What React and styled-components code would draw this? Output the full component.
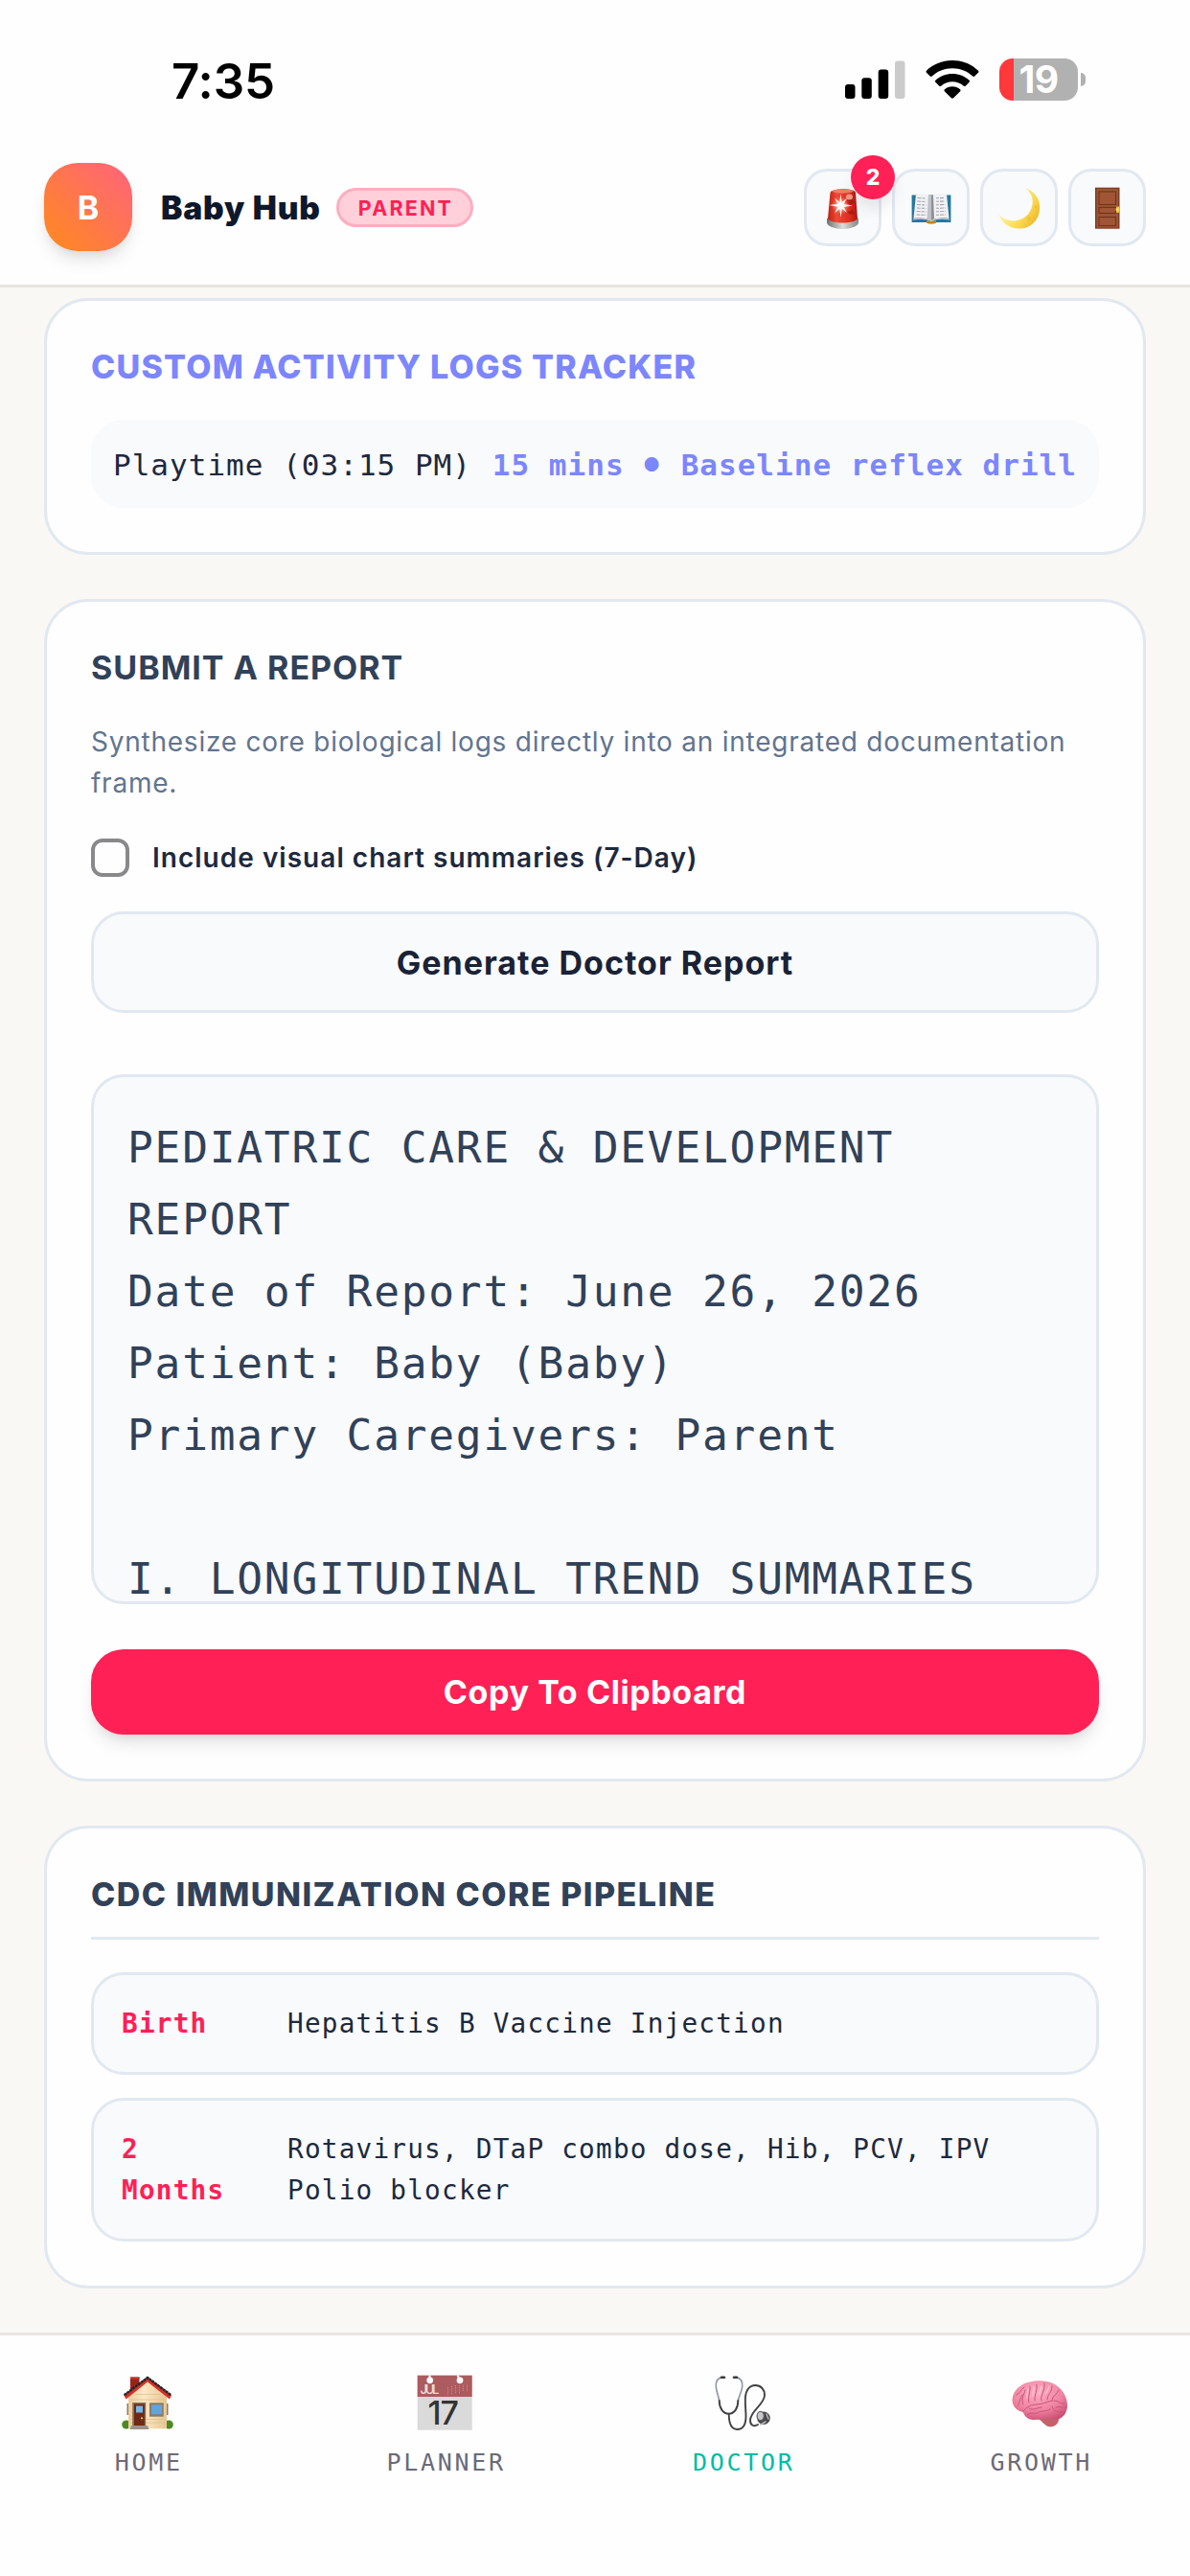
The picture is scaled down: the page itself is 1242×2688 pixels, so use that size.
import React, { useState } from "react";
import styled, { createGlobalStyle } from "styled-components";

const sans = `Inter, "Liberation Sans", sans-serif`;
const mono = `"DejaVu Sans Mono", "Liberation Mono", monospace`;

const REPORT = `PEDIATRIC CARE & DEVELOPMENT REPORT
Date of Report: June 26, 2026
Patient: Baby (Baby)
Primary Caregivers: Parent

I. LONGITUDINAL TREND SUMMARIES`;

const vaccines = [
    { age: "Birth", text: "Hepatitis B Vaccine Injection" },
    { age: "2 Months", text: "Rotavirus, DTaP combo dose, Hib, PCV, IPV Polio blocker" },
];

const SignalIcon = () => (
    <svg width="63" height="40" viewBox="0 0 63 40">
        <rect x="0" y="25" width="10.5" height="15" rx="3" fill="#000" />
        <rect x="17.3" y="18.3" width="10.5" height="21.7" rx="3" fill="#000" />
        <rect x="34.7" y="9.5" width="10.5" height="30.5" rx="3" fill="#000" />
        <rect x="52" y="0.5" width="10.5" height="39.5" rx="3" fill="#cbcbcb" />
    </svg>
);

const WifiIcon = () => (
    <svg width="56" height="40" viewBox="0 0 56 40">
        <path d="M28 0C38.800 0 48.300 4.200 55 10.700c.6.600.6 1.400.1 2L51.300 16.500c-.6.600-1.500.600-2.100 0C43.600 11.400 36.200 8.300 28 8.300S12.400 11.400 6.800 16.500c-.6.600-1.500.600-2.100 0L.9 12.700c-.5-.6-.5-1.400.1-2C7.700 4.200 17.200 0 28 0z" />
        <path d="M28 14C34.800 14 41 16.600 45.600 20.800c.6.600.6 1.400 0 2l-3.900 3.900c-.5.500-1.300.5-1.900 0C36.700 23.900 32.500 22.200 28 22.200s-8.700 1.700-11.800 4.500c-.6.500-1.400.5-1.900 0l-3.900-3.900c-.6-.6-.6-1.400 0-2C15 16.600 21.200 14 28 14z" />
        <path d="M28 27.300c3.100 0 5.900 1.100 8.100 2.900.6.500.6 1.400.1 2L29.100 39.300c-.6.600-1.600.6-2.200 0L19.800 32.200c-.5-.6-.5-1.500.1-2 2.200-1.800 5-2.900 8.100-2.900z" />
    </svg>
);

const SirenIcon = () => (
    <svg width="48" height="48" viewBox="0 0 48 48" overflow="visible">
        <defs>
            <linearGradient id="dome" x1="0" y1="0" x2="1" y2="0">
                <stop offset="0" stopColor="#c01f14" />
                <stop offset="0.3" stopColor="#ee4a35" />
                <stop offset="0.75" stopColor="#dc2c1c" />
                <stop offset="1" stopColor="#a81a12" />
            </linearGradient>
            <radialGradient id="glow">
                <stop offset="0" stopColor="#fff" />
                <stop offset="0.4" stopColor="#ffb9a6" stopOpacity="0.7" />
                <stop offset="1" stopColor="#ff6a50" stopOpacity="0" />
            </radialGradient>
            <linearGradient id="base" x1="0" y1="0" x2="1" y2="0">
                <stop offset="0" stopColor="#70716f" />
                <stop offset="0.5" stopColor="#dedddb" />
                <stop offset="1" stopColor="#858583" />
            </linearGradient>
        </defs>
        <path d="M7 36.500C7 33 40 33 40 36.500V40c0 4-8 7-16.500 7S7 44 7 40z" fill="url(#base)" />
        <path d="M10.500 9C12 4 36 4 37 9l2 27c-3 6-28 6-31 0z" fill="url(#dome)" />
        <ellipse cx="23.500" cy="7.500" rx="11" ry="2.200" fill="#f47c66" />
        <path d="M26 18l6-3 4 4-5 4zM28 29l6-2 2 4-5 1z" fill="#8f1710" opacity="0.6" />
        <ellipse cx="30.500" cy="13.500" rx="3.500" ry="3" fill="#f7b4a6" opacity="0.8" />
        <circle cx="21.500" cy="22.500" r="10" fill="url(#glow)" />
        <path d="M21.500 10l1.200 9L28 14.500l-3.300 6.500L34 22.500l-9.300 1.400 3.300 6.100-5.300-4L21.500 35l-1.200-9-5.300 4.500 3.300-6.500L9.500 22l8.800-1.200-3.300-6.300 5.300 4.500z" fill="#fff" opacity="0.9" />
    </svg>
);

const BookIcon = () => (
    <svg width="48" height="48" viewBox="0 0 48 48" overflow="visible">
        <path d="M3.600 11.500h40.800v28.400H3.600z" fill="#25779f" />
        <path d="M19 38h10v2.500c-2 1.600-8 1.600-10 0z" fill="#b58a22" />
        <path d="M5.500 36L8 10.500c6-1 12-.5 16 2 4-2.500 10-3 16-2L42.500 36c-7-1-14-.5-18.500 2-4.500-2.500-11.500-3-18.500-2z" fill="#f1f1f4" />
        <path d="M24 12.500V38c-1-1-3-1.700-4.500-2L21 11c1.200.4 2.200.9 3 1.500z" fill="#bfc0c8" />
        <path d="M24 12.500V38c1-1 2-1.500 3-1.800L26 11.400c-.8.300-1.400.6-2 1.100z" fill="#8e9099" />
        <g stroke="#a3a5b0" strokeWidth="1.100" fill="none">
            <path d="M9.500 14.500l9 .5M9.300 18l9.200.5M9 21.500l9.500.5M8.800 25l9.700.5M8.600 28.500l9.800.5M8.400 32l9.800.5" strokeDasharray="4 1 3 1" />
            <path d="M29 14.800l9-.3M29 18.300l9.200-.3M29 21.800l9.500-.3M29 25.300l9.700-.3M29 28.800l9.800-.3M29 32.300l10-.3" strokeDasharray="3 1 4 1" />
        </g>
        <path d="M5 37c7-1.500 14-1 19 1.500 5-2.500 12-3 19-1.500" stroke="#c9cad2" strokeWidth="1.200" fill="none" />
    </svg>
);

const MoonIcon = () => (
    <svg width="48" height="48" viewBox="0 0 48 48" overflow="visible">
        <defs>
            <linearGradient id="moon" x1="0.2" y1="0.4" x2="1" y2="0.9">
                <stop offset="0" stopColor="#fdf3a3" />
                <stop offset="0.55" stopColor="#fbd84d" />
                <stop offset="1" stopColor="#e8ae22" />
            </linearGradient>
        </defs>
        <path d="M30 4c9.500 3.500 15.200 11 15.200 20.500C45.200 37 36 46.600 23.500 46.600 13.500 46.600 5.500 41 2.500 31.800 8 37.500 14 39.200 20.500 38.200 31 36.500 38 28 37.700 18 37.500 12.500 35 8 30 4z" fill="url(#moon)" />
        <circle cx="34" cy="36" r="2" fill="#e2b02c" opacity="0.35" />
        <circle cx="41" cy="24" r="1.500" fill="#e2b02c" opacity="0.35" />
    </svg>
);

const DoorIcon = () => (
    <svg width="48" height="48" viewBox="0 0 48 48" overflow="visible">
        <rect x="11" y="3.700" width="25.500" height="43" fill="#7c3f25" />
        <rect x="12.500" y="5" width="22.500" height="40.500" fill="#9c5434" />
        <rect x="15" y="8" width="17.500" height="13.500" fill="#a05636" stroke="#713518" strokeWidth="1.100" />
        <rect x="15" y="24.500" width="17.500" height="6" fill="#a05636" stroke="#713518" strokeWidth="1.100" />
        <rect x="15" y="34.500" width="17.500" height="9" fill="#a05636" stroke="#713518" strokeWidth="1.100" />
        <rect x="33" y="23.500" width="3.500" height="6.500" rx="1" fill="#f1c232" />
        <rect x="32.500" y="25.500" width="3" height="2" fill="#fce57b" />
    </svg>
);

const HomeIcon = () => (
    <svg width="60" height="60" viewBox="0 0 60 60" overflow="visible">
        <defs>
            <linearGradient id="wall" x1="0" y1="0" x2="1" y2="0">
                <stop offset="0" stopColor="#ecd0a0" />
                <stop offset="0.4" stopColor="#fbe8c4" />
                <stop offset="1" stopColor="#e6c794" />
            </linearGradient>
        </defs>
        <circle cx="6.800" cy="53" r="4.600" fill="#4c8a24" />
        <circle cx="51.200" cy="53" r="4.600" fill="#4c8a24" />
        <path d="M7.500 31h2v12h-2zM48.500 31h2v12h-2z" fill="#8d7a68" />
        <path d="M11 3.500h9.500V19H11z" fill="#9c231b" />
        <path d="M11 3.500h9.500v2H11z" fill="#c4392e" />
        <path d="M9 24L29 7l20 17v33.300H9z" fill="url(#wall)" />
        <path d="M11 27h36M11 47.500h36M11 51h36M16 21.500h26" stroke="#dcbd8c" strokeWidth="0.700" />
        <path d="M29 3L54 22.300 52 26.500 29 8.500 6.500 26.500 4.300 22.300z" fill="#d23228" />
        <path d="M4.600 22.300L29 4l24.600 18.300" stroke="#1f2428" strokeWidth="2.400" strokeDasharray="3 0.600" fill="none" />
        <path d="M13.200 30h14v24.500h-14z" fill="#8d6f54" />
        <path d="M15 31.500h10.800v23H15z" fill="#6d2a18" />
        <path d="M17 33.500h7v7h-7z" fill="#74b9e8" />
        <circle cx="23" cy="46.300" r="1.100" fill="#f5c33b" />
        <path d="M31 30.300h14.700v14.400H31z" fill="#8d7a64" />
        <path d="M33 32.300h11v10H33z" fill="#62a5dc" />
        <path d="M12 54h17l1.500 4h-20z" fill="#9c938c" />
    </svg>
);

const CalendarIcon = () => (
    <svg width="60" height="60" viewBox="0 0 60 60" overflow="visible">
        <rect x="-0.300" y="1.700" width="57" height="57" fill="#dadada" />
        <rect x="-0.300" y="1.700" width="57" height="22.300" fill="#ac5b5e" />
        <path d="M12.500 1.500v4M41.500 1.500l2 4" stroke="#fdfdfd" strokeWidth="2" />
        <circle cx="12.700" cy="6.800" r="3.400" fill="#fdfdfd" />
        <circle cx="44" cy="6.800" r="3.400" fill="#fdfdfd" />
        <path d="M31.500 14v8M35.500 13v9M39.500 12v9M43.500 12v9M47.500 11.500v7M51.500 11.500v7" stroke="#c98b8d" strokeWidth="1" strokeDasharray="1 0.800" />
        <text x="2.500" y="21.300" fontFamily="Inter" fontSize="13" fontWeight="500" textLength="22.500" fill="#f0dede">JUL</text>
        <text x="10.500" y="53" fontFamily="Inter" fontSize="34" fontWeight="500" textLength="35" fill="#333">17</text>
    </svg>
);

const StethoscopeIcon = () => (
    <svg width="60" height="60" viewBox="0 0 60 60" overflow="visible" fill="none" strokeLinecap="round">
        <path d="M8 3.700C2.500 4.500 1 8 1.300 13c.3 5 2.400 10 3.400 15" stroke="#9499a6" strokeWidth="1.700" />
        <path d="M22 3.700c5.500.8 7 4.300 6.700 9.300-.3 5-3.400 10-4.400 15" stroke="#9499a6" strokeWidth="1.700" />
        <path d="M7 3.700h3M20 3.700h3" stroke="#3a3a3c" strokeWidth="2.600" />
        <path d="M4.700 28c0 8 4 13.700 9.900 13.700S24.300 36 24.300 28" stroke="#404143" strokeWidth="1.900" />
        <path d="M14.700 41.700C14.700 52 17.500 58 23.500 58c6.500 0 9-6 9-14 0-6-1-12-.6-19 .4-8 4.400-13 10.400-13s9.900 4.500 9.700 10.500C51.700 32 37 39 37 48.500c0 5.500 4 7 8 4.500" stroke="#404143" strokeWidth="1.900" />
        <circle cx="51" cy="46.300" r="6.800" fill="#4a4a4d" />
        <ellipse cx="47.700" cy="44" rx="3.600" ry="4.600" fill="#c9c9cd" stroke="#5e5e61" strokeWidth="1.200" />
        <path d="M48 53l5-3M54 42l2 5" stroke="#b9b9bd" strokeWidth="1.500" />
    </svg>
);

const BrainIcon = () => (
    <svg width="60" height="60" viewBox="0 0 60 60" overflow="visible">
        <defs>
            <radialGradient id="brain" cx="0.45" cy="0.3" r="0.75">
                <stop offset="0" stopColor="#fdaec3" />
                <stop offset="0.6" stopColor="#f084a2" />
                <stop offset="1" stopColor="#cb4f73" />
            </radialGradient>
        </defs>
        <path d="M27 47l20-4 1 5c-.5 5-5.500 8-10 7.200-4-.7-6-4.200-11-8.200z" fill="#c4616b" />
        <path d="M10.500 40C4 38.500-.5 34-.5 27 0 17 9 10 18 8.500c8-2 17-1.500 24 1.500 8 4 14.500 12 15 22 .3 8-4 14-10 15.500-5 .5-8-2-12-1.500-5 1.500-14 3.500-19 .5-3-1.500-4-4-5.500-6.500z" fill="url(#brain)" />
        <g stroke="#c9557a" strokeWidth="1" fill="none" strokeLinecap="round">
            <path d="M11 39c3-4 8-7 14-7 7-.5 11-3 17-4M6 33c1-5 2-8 4-11M4 22c3-1 4-5 8-8M11 32c-3-6 1-10 2-15M17 30c-2-6 2-11 1-17M23 28c-1-5 3-10 2-17M30 28c-2-6 4-9 3-18M36 27c0-6 5-7 5-14M41 27c1-5 6-6 7-10M43 28c5 0 7 4 11 3M45 35c4-2 8 2 11 0M41 34c1 5 6 6 11 6" />
            <path d="M15 43c4-4 8 0 12-3 4-2 8 0 12-3M17 36c4 3 9-1 13-1" />
        </g>
        <g stroke="#ffc9d7" strokeWidth="1.400" fill="none" strokeLinecap="round" opacity="0.8">
            <path d="M15 25c-1-4 1-7 1-9M21 23c0-4 1-7 1-9M28 22c0-4 2-6 2-9M35 20c1-3 3-4 3-7" />
        </g>
    </svg>
);

const tabs = [
    { id: "home", label: "HOME", icon: <HomeIcon /> },
    { id: "planner", label: "PLANNER", icon: <CalendarIcon /> },
    { id: "doctor", label: "DOCTOR", icon: <StethoscopeIcon /> },
    { id: "growth", label: "GROWTH", icon: <BrainIcon /> },
];

const App = () => {
    const [activeTab, setActiveTab] = useState("doctor");
    const [includeCharts, setIncludeCharts] = useState(false);

    return (
        <>
            <GlobalStyle />
            <Screen>
                <Header>
                    <StatusBar>
                        <Time>7:35</Time>
                        <StatusIcons>
                            <SignalIcon />
                            <WifiIcon />
                            <BatteryWrap>
                                <Battery>19</Battery>
                                <BatteryTip />
                            </BatteryWrap>
                        </StatusIcons>
                    </StatusBar>
                    <TopBar>
                        <Logo>B</Logo>
                        <AppName>Baby Hub</AppName>
                        <RolePill>PARENT</RolePill>
                        <Actions>
                            <IconButton>
                                <SirenIcon />
                                <CountBadge>2</CountBadge>
                            </IconButton>
                            <IconButton><BookIcon /></IconButton>
                            <IconButton><MoonIcon /></IconButton>
                            <IconButton><DoorIcon /></IconButton>
                        </Actions>
                    </TopBar>
                </Header>

                <Main>
                    <Card>
                        <CardTitle $color="#7c86ff" $weight={800} $spacing="1.2px">CUSTOM ACTIVITY LOGS TRACKER</CardTitle>
                        <LogRow>
                            <span>Playtime (03:15 PM)</span>
                            <strong>15 mins <Bullet>•</Bullet> Baseline reflex drill</strong>
                        </LogRow>
                    </Card>

                    <Card>
                        <CardTitle $weight={700} $spacing="1px">SUBMIT A REPORT</CardTitle>
                        <Description>
                            Synthesize core biological logs directly into an integrated documentation frame.
                        </Description>
                        <CheckLabel>
                            <Checkbox
                                type="checkbox"
                                checked={includeCharts}
                                onChange={(e) => setIncludeCharts(e.target.checked)}
                            />
                            Include visual chart summaries (7-Day)
                        </CheckLabel>
                        <GenerateButton>Generate Doctor Report</GenerateButton>
                        <ReportBox>{REPORT}</ReportBox>
                        <CopyButton>Copy To Clipboard</CopyButton>
                    </Card>

                    <Card>
                        <DividedTitle $weight={800} $spacing="1.470px">CDC IMMUNIZATION CORE PIPELINE</DividedTitle>
                        <VaccineList>
                            {vaccines.map((v) => (
                                <VaccineRow key={v.age}>
                                    <VaccineAge>{v.age}</VaccineAge>
                                    <VaccineText>{v.text}</VaccineText>
                                </VaccineRow>
                            ))}
                        </VaccineList>
                    </Card>
                </Main>

                <TabBar>
                    {tabs.map((tab) => (
                        <Tab key={tab.id} $active={tab.id === activeTab} onClick={() => setActiveTab(tab.id)}>
                            {tab.icon}
                            <span>{tab.label}</span>
                        </Tab>
                    ))}
                </TabBar>
            </Screen>
        </>
    );
};

const GlobalStyle = createGlobalStyle`
  * {
    box-sizing: border-box;
    margin: 0;
  }

  body {
    background: #faf8f5;
    font-family: ${sans};
  }

  button {
    font-family: inherit;
    padding: 0;
    border: none;
  }

  svg {
    display: block;
    flex-shrink: 0;
  }
`;

const Screen = styled.div`
  display: flex;
  flex-direction: column;
  width: 1242px;
  height: 2688px;
  overflow: hidden;
  background: #faf8f5;
`;

const Header = styled.header`
  flex-shrink: 0;
  height: 300px;
  background: #fefefe;
  border-bottom: 3px solid #e7e5de;
`;

const StatusBar = styled.div`
  display: flex;
  justify-content: space-between;
  height: 170px;
  padding: 61px 109px 0 179px;
`;

const Time = styled.div`
  height: 48px;
  font-size: 51px;
  font-weight: 600;
  line-height: 48px;
  letter-spacing: -0.1px;
  color: #000;
`;

const StatusIcons = styled.div`
  display: flex;
  align-items: center;
  gap: 21px;
  height: 44px;
`;

const BatteryWrap = styled.div`
  display: flex;
  align-items: center;
  gap: 3px;
`;

const Battery = styled.div`
  width: 82px;
  height: 44px;
  border-radius: 14px;
  background: linear-gradient(90deg, #ff383c 0 15px, #b1b1b1 15px);
  color: #fff;
  font-size: 39px;
  font-weight: 700;
  line-height: 44px;
  letter-spacing: -0.5px;
  text-align: center;
`;

const BatteryTip = styled.div`
  width: 5px;
  height: 14px;
  border-radius: 0 7px 7px 0;
  background: #b1b1b1;
`;

const TopBar = styled.div`
  display: flex;
  align-items: center;
  height: 92px;
  padding: 0 46px;
`;

const Logo = styled.div`
  width: 92px;
  height: 92px;
  border-radius: 35px;
  background: linear-gradient(45deg, #ff8a1c, #ff637e);
  box-shadow: 0 12px 18px -3px rgba(0, 0, 0, 0.1), 0 6px 12px -6px rgba(0, 0, 0, 0.1);
  color: #fff;
  font-size: 34px;
  font-weight: 700;
  line-height: 93px;
  text-align: center;
`;

const AppName = styled.h1`
  margin-left: 30px;
  width: 166px;
  font-size: 33.500px;
  font-weight: 900;
  line-height: 42px;
  padding-top: 2px;
  letter-spacing: 0.850px;
  white-space: nowrap;
  color: #0f172b;
`;

const RolePill = styled.span`
  width: 143px;
  height: 41px;
  margin-left: 17px;
  border: 3px solid #ffadc0;
  border-radius: 21px;
  background: #ffd0da;
  color: #ff2056;
  font-size: 21.5px;
  font-weight: 700;
  line-height: 36px;
  letter-spacing: 2.2px;
  text-indent: 2px;
  text-align: center;
`;

const Actions = styled.div`
  display: flex;
  gap: 11px;
  margin-left: auto;
`;

const IconButton = styled.button`
  position: relative;
  display: flex;
  align-items: center;
  justify-content: center;
  width: 81px;
  height: 81px;
  border: 3px solid #e2e8f0;
  border-radius: 24px;
  background: #f8fafc;
`;

const CountBadge = styled.span`
  position: absolute;
  top: -17px;
  right: -17px;
  width: 46px;
  height: 46px;
  border-radius: 50%;
  background: #ff2056;
  box-shadow: 0 12px 18px -3px rgba(0, 0, 0, 0.1);
  color: #fff;
  font-size: 23px;
  font-weight: 800;
  line-height: 47px;
  text-align: center;
  z-index: 1;
`;

const Main = styled.main`
  flex: 1;
  display: flex;
  flex-direction: column;
  gap: 46px;
  padding: 11px 46px 0;
`;

const Card = styled.section`
  padding: 46px;
  border: 3px solid #e2e8f0;
  border-radius: 46px;
  background: #fefefe;
`;

const CardTitle = styled.h2`
  height: 46px;
  font-size: 34px;
  line-height: 46px;
  font-weight: ${(props) => props.$weight};
  letter-spacing: ${(props) => props.$spacing};
  color: ${(props) => props.$color || "#314158"};
  white-space: nowrap;
`;

const DividedTitle = styled(CardTitle)`
  height: 70px;
  border-bottom: 3px solid #e2e8f0;
`;

const LogRow = styled.div`
  display: flex;
  justify-content: space-between;
  height: 92px;
  margin-top: 32px;
  padding: 1px 23px 0;
  border-radius: 34px;
  background: #f8fafc;
  font-family: ${mono};
  font-size: 31px;
  line-height: 92px;
  letter-spacing: 1.020px;
  white-space: nowrap;
  color: #1d293d;

  strong {
    font-weight: 700;
    color: #7c86ff;
  }
`;

const Bullet = styled.span`
  display: inline-block;
  line-height: 1;
  transform: scale(1.35);
`;

const Description = styled.p`
  margin-top: 33px;
  font-size: 28px;
  line-height: 43px;
  letter-spacing: 0.760px;
  color: #62748e;
`;

const CheckLabel = styled.label`
  display: flex;
  align-items: center;
  gap: 24px;
  height: 40px;
  margin-top: 36px;
  font-size: 28px;
  font-weight: 600;
  letter-spacing: 1.020px;
  color: #1d293d;
`;

const Checkbox = styled.input`
  appearance: none;
  width: 40px;
  height: 40px;
  border: 4px solid #89898b;
  border-radius: 12px;
  background: #fefefe;
`;

const GenerateButton = styled.button`
  width: 100%;
  height: 106px;
  margin-top: 36px;
  border: 3px solid #e2e8f0;
  border-radius: 34px;
  background: #f8fafc;
  color: #1a2236;
  font-size: 34px;
  font-weight: 700;
  letter-spacing: 1px;
`;

const ReportBox = styled.pre`
  height: 553px;
  margin-top: 64px;
  padding: 36px 35px 0;
  border: 3px solid #e2e8f0;
  border-radius: 34px;
  background: #f8fafc;
  color: #314158;
  font-family: ${mono};
  font-size: 44.500px;
  line-height: 75px;
  letter-spacing: 1.780px;
  white-space: pre-wrap;
`;

const CopyButton = styled.button`
  width: 100%;
  height: 89px;
  margin-top: 47px;
  border-radius: 34px;
  background: #ff2056;
  box-shadow: 0 12px 18px -3px rgba(0, 0, 0, 0.1), 0 6px 12px -6px rgba(0, 0, 0, 0.1);
  color: #fff;
  font-size: 34px;
  font-weight: 700;
  letter-spacing: 0.6px;
`;

const VaccineList = styled.div`
  display: flex;
  flex-direction: column;
  gap: 24px;
  margin-top: 34px;
`;

const VaccineRow = styled.div`
  display: flex;
  gap: 35px;
  padding: 29px 29px 28px;
  border: 3px solid #e2e8f0;
  border-radius: 34px;
  background: #f8fafc;
  font-family: ${mono};
  font-size: 27.700px;
  line-height: 43.500px;
  letter-spacing: 1.220px;
  color: #1d293d;
`;

const VaccineAge = styled.strong`
  flex: 0 0 138px;
  color: #ff2056;
`;

const VaccineText = styled.span`
  flex: 1;
`;

const TabBar = styled.nav`
  flex-shrink: 0;
  display: grid;
  grid-template-columns: repeat(4, 1fr);
  height: 254px;
  padding-top: 40px;
  border-top: 3px solid #e7e5de;
  background: #fefefe;
`;

const Tab = styled.button`
  display: flex;
  flex-direction: column;
  align-items: center;
  gap: 13px;
  background: none;
  font-family: ${mono};
  font-size: 25px;
  line-height: 40px;
  letter-spacing: 2.700px;
  color: ${(props) => (props.$active ? "#00bba7" : "#6b6a78")};
`;

export default App;
